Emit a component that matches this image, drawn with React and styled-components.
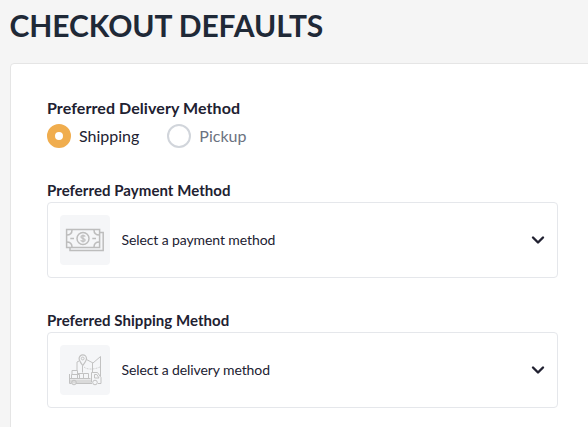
import React, { useState } from "react";
import styled, { createGlobalStyle } from "styled-components";

const GlobalStyle = createGlobalStyle`
  * { box-sizing: border-box; }
  body {
    margin: 0;
    overflow: hidden;
    background: #f5f5f5;
    color: #212131;
    font-family: Lato, sans-serif;
  }
`;

const Page = styled.main`
  height: 427px;
  padding: 4px 0 0 9.5px;
  overflow: hidden;
`;

const Title = styled.h1`
  margin: 0 0 16px;
  color: #1f2937;
  font-size: 30px;
  line-height: 43px;
  font-weight: 700;
  letter-spacing: -0.08px;
  white-space: nowrap;
`;

const Card = styled.section`
  width: 620px;
  height: 420px;
  margin-left: 0.5px;
  padding: 34px 36px;
  background: #fff;
  border: 1px solid #e5e5e5;
  border-radius: 4px;
`;

const DeliveryGroup = styled.div`
  height: 83px;
`;

const Heading = styled.h2`
  margin: 0;
  font-size: 16px;
  line-height: 20px;
  font-weight: 700;
  letter-spacing: 0.08px;
`;

const Options = styled.div`
  display: flex;
  gap: 28px;
  margin-top: 6px;
`;

const Option = styled.button`
  display: flex;
  align-items: center;
  gap: 8px;
  height: 24px;
  padding: 0;
  border: 0;
  background: none;
  color: ${({ $checked }) => ($checked ? "#212131" : "#6b7280")};
  font: 400 16px/24px Lato, sans-serif;
`;

const Radio = styled.span`
  width: 24px;
  height: 24px;
  border: ${({ $checked }) => ($checked ? "8px solid #f0ad4e" : "2px solid #d1d5db")};
  border-radius: 50%;
  background: #fff;
`;

const Field = styled.div`
  width: 511px;
  height: 130px;
`;

const Label = styled.div`
  height: 21px;
  font-size: 15px;
  line-height: 18px;
  font-weight: 700;
  letter-spacing: 0.05px;
`;

const Select = styled.button`
  display: flex;
  align-items: center;
  width: 511px;
  height: 76px;
  padding: 0 12px;
  border: 1px solid #e5e7eb;
  border-radius: 4px;
  background: #fff;
  color: #212131;
  font: 400 14px/20px Lato, sans-serif;
  letter-spacing: -0.1px;
  text-align: left;
`;

const Thumb = styled.span`
  display: flex;
  align-items: center;
  justify-content: center;
  width: 50px;
  height: 50px;
  margin-right: 11.5px;
  border-radius: 4px;
  background: #f5f6f8;
`;

const Placeholder = styled.span`
  flex: 1;
`;

const CashIcon = () => (
  <svg width="50" height="50" viewBox="0 0 50 50" fill="none" stroke="#bdbdbd" strokeWidth="1.5">
    <path d="M6.6 14.5h33v17.9h-33z" />
    <path d="M40 17.6h3.2v18H10v-3" />
    <path d="M12 15c0 3-2 5-5.5 5M34 15c0 3 2 5 5.5 5M12 32c0-3-2-5-5.5-5M34 32c0-3 2-5 5.5-5" />
    <path d="M10.3 23.5H14M32.3 23.5H36" />
    <circle cx="23" cy="23.5" r="6" />
    <path d="M25.2 21.5c-.5-1.2-4.3-1.2-4.3.5 0 2 4.3.9 4.3 3 0 1.8-4 1.7-4.5.3M23 19.6v7.8" strokeWidth="1.1" />
  </svg>
);

const TruckIcon = () => (
  <svg width="50" height="50" viewBox="0 0 50 50" fill="none" stroke="#c2c2c2" strokeWidth="1">
    <path d="M10 34.5h21v4H10z" fill="#dadada" stroke="none" />
    <path d="M9.5 29v9.5h2M16 38.5h16M9.5 33.5h21" />
    <path d="M11.5 29.5h8v4h-8zM12 25.5h5.5v4H12zM17.5 28.5h6v5h-6zM23.5 28.5h5v5h-5z" />
    <path d="M31.5 37.5v-10h6l3.5 5v6h-3M34.5 29.5h2.3l2.2 3.5h-4.5z" />
    <circle cx="14" cy="37.5" r="2.3" />
    <circle cx="35" cy="37.5" r="2.3" />
    <path d="M22.7 20.5c-2-2.7-3.6-4.7-3.6-6.9a3.7 3.7 0 0 1 7.4 0c0 2.2-1.8 4.2-3.8 6.9z" strokeWidth="1.2" />
    <circle cx="22.7" cy="13.5" r="1.4" />
    <path d="M19 16l-2 1v8M26.5 14.5l6.5 3.5 7.5-6.5V31M32.5 18v9M22.5 21v6.5" />
    <path d="M24 22c3 2.8 10 2.7 16 0" strokeDasharray="2 1" strokeWidth=".7" />
  </svg>
);

const Chevron = () => (
  <svg width="14" height="10" viewBox="0 0 14 10" fill="none" stroke="#212131" strokeWidth="2.4" strokeLinecap="round" strokeLinejoin="round">
    <path d="M2 2.5l5 5 5-5" />
  </svg>
);

const fields = [
  { label: "Preferred Payment Method", text: "Select a payment method", Icon: CashIcon },
  { label: "Preferred Shipping Method", text: "Select a delivery method", Icon: TruckIcon },
];

export default function App() {
  const [method, setMethod] = useState("Shipping");
  return (
    <>
      <GlobalStyle />
      <Page>
        <Title>CHECKOUT DEFAULTS</Title>
        <Card>
          <DeliveryGroup>
            <Heading>Preferred Delivery Method</Heading>
            <Options role="radiogroup">
              {["Shipping", "Pickup"].map((name) => (
                <Option
                  key={name}
                  role="radio"
                  aria-checked={method === name}
                  $checked={method === name}
                  onClick={() => setMethod(name)}
                >
                  <Radio $checked={method === name} />
                  {name}
                </Option>
              ))}
            </Options>
          </DeliveryGroup>
          {fields.map(({ label, text, Icon }) => (
            <Field key={label}>
              <Label>{label}</Label>
              <Select>
                <Thumb><Icon /></Thumb>
                <Placeholder>{text}</Placeholder>
                <Chevron />
              </Select>
            </Field>
          ))}
        </Card>
      </Page>
    </>
  );
}
